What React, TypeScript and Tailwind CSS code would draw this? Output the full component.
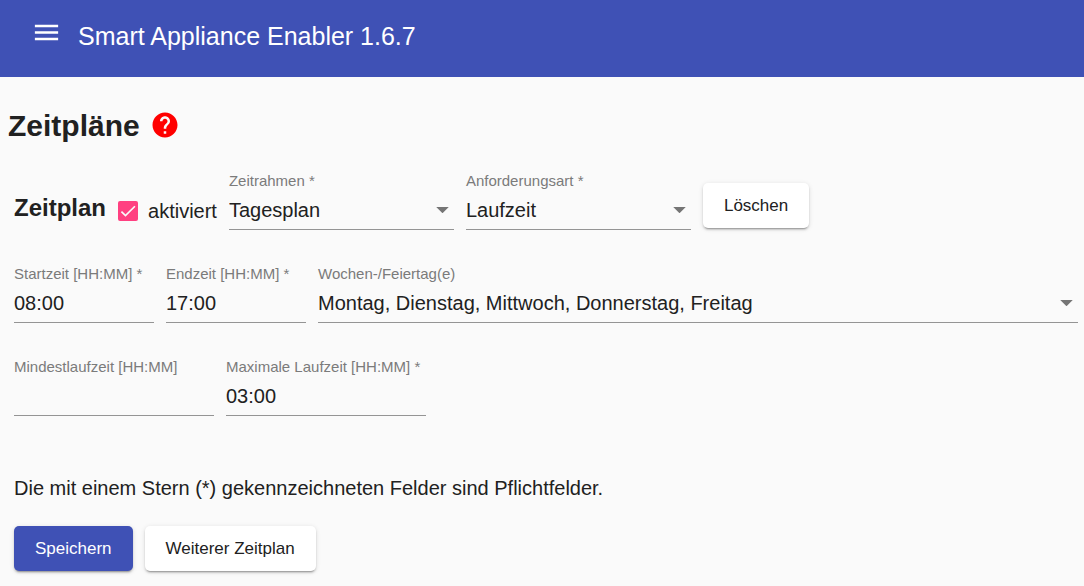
import { useState, type ReactNode } from 'react';

function Field({ id, label, className, children }: { id: string; label: string; className: string; children: ReactNode }) {
  return (
    <div className={`flex flex-col border-b border-[#949494] ${className}`}>
      <label htmlFor={id} className="h-5 whitespace-nowrap text-[15px] leading-5 text-[#7b7b7b]">
        {label}
      </label>
      {children}
    </div>
  );
}

function TextField({ id, label, value, className }: { id: string; label: string; value: string; className: string }) {
  return (
    <Field id={id} label={label} className={className}>
      <input id={id} type="text" defaultValue={value} className="h-[38px] w-full bg-transparent text-xl outline-none" />
    </Field>
  );
}

function SelectField({ id, label, options, className }: { id: string; label: string; options: string[]; className: string }) {
  return (
    <Field id={id} label={label} className={className}>
      <div className="relative">
        <select id={id} className="h-[38px] w-full appearance-none bg-transparent pr-6 text-xl outline-none">
          {options.map((option) => (
            <option key={option}>{option}</option>
          ))}
        </select>
        <svg viewBox="0 0 13 6" aria-hidden="true" className="pointer-events-none absolute top-4 right-[5px] h-1.5 w-[13px] fill-[#757575]">
          <path d="M.25 0h12.5L6.5 6.25z" />
        </svg>
      </div>
    </Field>
  );
}

function Button({ primary = false, children }: { primary?: boolean; children: ReactNode }) {
  return (
    <button
      type="button"
      className={`h-[45px] rounded-[5px] px-[21px] text-[17px] shadow-[0_3px_1px_-2px_rgba(0,0,0,0.2),0_2px_2px_0_rgba(0,0,0,0.14),0_1px_5px_0_rgba(0,0,0,0.12)] ${
        primary ? 'bg-[#3f51b5] text-white' : 'bg-white'
      }`}
    >
      {children}
    </button>
  );
}

export default function App() {
  const [enabled, setEnabled] = useState(true);

  return (
    <div className="min-h-screen bg-[#fafafa] font-['Liberation_Sans',Arial,sans-serif] text-[#212121]">
      <header className="flex h-[77px] items-center gap-4 bg-[#3f51b5] px-[31px] text-white">
        <button type="button" aria-label="Menü" className="mb-3">
          <svg viewBox="0 0 24 24" className="size-[31px] fill-current">
            <path d="M3 18h18v-2H3v2zm0-5h18v-2H3v2zm0-7v2h18V6H3z" />
          </svg>
        </button>
        <span className="mb-1.5 text-[25px] leading-8">Smart Appliance Enabler 1.6.7</span>
      </header>

      <main className="pt-7">
        <div className="flex items-center gap-2.5 px-2">
          <h1 className="text-3xl leading-[42px] font-bold">Zeitpläne</h1>
          <a href="#hilfe" aria-label="Hilfe" className="mb-0.5">
            <svg viewBox="0 0 24 24" className="size-[30px] fill-[#ff0000]">
              <path d="M12 2C6.48 2 2 6.48 2 12s4.48 10 10 10 10-4.48 10-10S17.52 2 12 2zm1 17h-2v-2h2v2zm2.07-7.75l-.9.92C13.45 12.9 13 13.5 13 15h-2v-.5c0-1.1.45-2.1 1.17-2.83l1.24-1.26c.37-.36.59-.86.59-1.41 0-1.1-.9-2-2-2s-2 .9-2 2H8c0-2.21 1.79-4 4-4s4 1.79 4 4c0 .88-.36 1.68-.93 2.25z" />
            </svg>
          </a>
        </div>

        <form className="pt-6 pr-1.5 pb-3 pl-3.5">
          <div className="flex flex-col gap-[34px]">
            <div className="flex flex-wrap items-end gap-x-3">
              <h2 className="pb-1.5 text-2xl font-bold">Zeitplan</h2>
              <div className="flex items-center gap-2.5 pb-1">
                <span className="relative flex">
                  <input
                    id="enabled"
                    type="checkbox"
                    checked={enabled}
                    onChange={(event) => setEnabled(event.target.checked)}
                    className="size-5 appearance-none rounded-xs border-2 border-[#757575] checked:border-[#ff4081] checked:bg-[#ff4081]"
                  />
                  {enabled && (
                    <svg viewBox="0 0 24 24" aria-hidden="true" className="pointer-events-none absolute inset-0 size-5 fill-none stroke-[#fafafa] stroke-2">
                      <path d="M4.1 12.7 9 17.6 20.3 6.3" />
                    </svg>
                  )}
                </span>
                <label htmlFor="enabled" className="text-xl leading-[30px]">
                  aktiviert
                </label>
              </div>
              <SelectField id="timeframe" label="Zeitrahmen *" options={['Tagesplan', 'Mehrtagesplan']} className="w-[225px]" />
              <SelectField id="request" label="Anforderungsart *" options={['Laufzeit', 'Energiemenge']} className="w-[225px]" />
              <div className="flex pb-0.5">
                <Button>Löschen</Button>
              </div>
            </div>

            <div className="flex gap-3">
              <TextField id="start" label="Startzeit [HH:MM] *" value="08:00" className="w-[140px]" />
              <TextField id="end" label="Endzeit [HH:MM] *" value="17:00" className="w-[140px]" />
              <SelectField
                id="days"
                label="Wochen-/Feiertag(e)"
                options={['Montag, Dienstag, Mittwoch, Donnerstag, Freitag']}
                className="min-w-0 flex-1"
              />
            </div>

            <div className="flex gap-3">
              <TextField id="min-runtime" label="Mindestlaufzeit [HH:MM]" value="" className="w-[200px]" />
              <TextField id="max-runtime" label="Maximale Laufzeit [HH:MM] *" value="03:00" className="w-[200px]" />
            </div>
          </div>

          <p className="mt-14 text-xl leading-8">Die mit einem Stern (*) gekennzeichneten Felder sind Pflichtfelder.</p>

          <div className="mt-[22px] flex gap-3">
            <Button primary>Speichern</Button>
            <Button>Weiterer Zeitplan</Button>
          </div>
        </form>
      </main>
    </div>
  );
}
